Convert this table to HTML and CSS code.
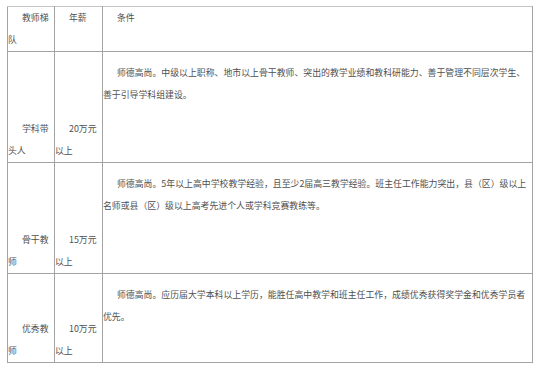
FILE: index.html
```html
<!DOCTYPE html>
<html lang="zh-CN">
<head>
<meta charset="utf-8">
<title>教师梯队</title>
<link rel="stylesheet" href="styles.css">
</head>
<body>
<table class="tiers">
  <colgroup>
    <col class="col-tier">
    <col class="col-pay">
    <col class="col-cond">
  </colgroup>
  <tr class="head">
    <td class="cell">教师梯队</td>
    <td class="cell">年薪</td>
    <td class="cell">条件</td>
  </tr>
  <tr class="row row-tall">
    <td class="cell bottom">学科带头人</td>
    <td class="cell bottom">20万元以上</td>
    <td class="cell cond">师德高尚。中级以上职称、地市以上骨干教师、突出的教学业绩和教科研能力、善于管理不同层次学生、<br>善于引导学科组建设。</td>
  </tr>
  <tr class="row row-tall">
    <td class="cell bottom">骨干教师</td>
    <td class="cell bottom">15万元以上</td>
    <td class="cell cond">师德高尚。5年以上高中学校教学经验，且至少2届高三教学经验。班主任工作能力突出，县（区）级以上<br>名师或县（区）级以上高考先进个人或学科竞赛教练等。</td>
  </tr>
  <tr class="row row-short">
    <td class="cell bottom">优秀教师</td>
    <td class="cell bottom">10万元以上</td>
    <td class="cell cond">师德高尚。应历届大学本科以上学历，能胜任高中教学和班主任工作，成绩优秀获得奖学金和优秀学员者<br>优先。</td>
  </tr>
</table>
</body>
</html>
```

FILE: styles.css
```css
html, body {
  background: #ffffff;
}

body {
  margin: 6px 0 0 7px;
  font-family: "Noto Sans CJK SC", "Microsoft YaHei", sans-serif;
  font-size: 8.9px;
  line-height: 22px;
  color: #505050;
}

.tiers {
  border-collapse: collapse;
  table-layout: fixed;
  width: 525px;
}

.col-tier { width: 47px; }
.col-pay { width: 48px; }
.col-cond { width: 430px; }

.cell {
  border: 1px solid #a3a3a3;
  padding: 0;
  text-indent: 14px;
  vertical-align: top;
  text-align: left;
}

.head .cell {
  height: 44px;
  border-top-color: #c4c4c4;
}

.row-tall .cell {
  height: 110px;
}

.row-short .cell {
  height: 88px;
}

.bottom {
  vertical-align: bottom;
}

.cond {
  padding-top: 10px;
}

.row-tall .cond {
  height: 100px;
}

.row-short .cond {
  height: 78px;
}
```
